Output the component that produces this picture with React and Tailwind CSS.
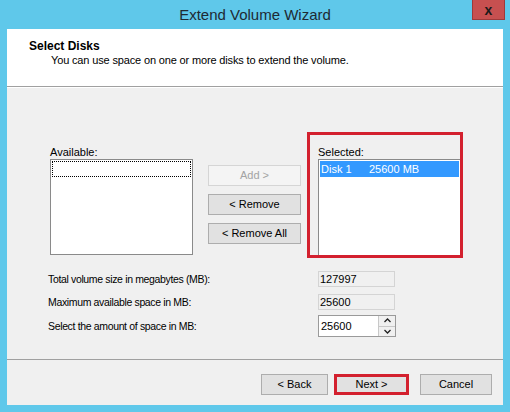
import React from 'react';

const font = "font-['Liberation_Sans',Arial,sans-serif]";

const Btn = ({ children, disabled, className = '' }) => (
  <button
    disabled={disabled}
    className={`h-[21px] text-[11px] leading-none border ${
      disabled
        ? 'bg-[#f4f4f4] border-[#d5d5d5] text-[#a3a3a3]'
        : 'bg-[#e1e1e1] border-[#adadad] text-black'
    } ${className}`}
  >
    {children}
  </button>
);

const Chevron = ({ up }) => (
  <svg width="7" height="5" viewBox="0 0 7 5">
    <path
      d={up ? 'M0.5 4L3.5 1L6.5 4' : 'M0.5 1L3.5 4L6.5 1'}
      fill="none"
      stroke="#222"
      strokeWidth="1.3"
    />
  </svg>
);

const FieldRow = ({ label, children, className = '' }) => (
  <div className={`flex items-center ${className}`}>
    <div className="w-[270px] text-[10.5px] tracking-[-0.35px] leading-[13px] text-black">{label}</div>
    {children}
  </div>
);

export default function App() {
  return (
    <div className={`w-[510px] h-[412px] bg-[#5fc8ea] flex flex-col pb-[7px] ${font}`}>
      {/* title bar */}
      <div className="relative h-[29px] flex items-center justify-center">
        <span className="text-[15px] text-[#1e2a33] pt-[1px]">Extend Volume Wizard</span>
        <div className="absolute right-[5px] top-0 w-[33px] h-[20px] bg-[#c75050] border border-[#9e3a3a] border-t-0 flex items-center justify-center">
          <span className="text-[14px] font-bold text-[#1a1a1a] leading-none">x</span>
        </div>
      </div>

      {/* client area */}
      <div className="mx-[7px] flex-1 flex flex-col bg-[#f0f0f0]">
        {/* header */}
        <div className="h-[58px] bg-white pl-[22px] pt-[10px] border-b border-[#a0a0a0]">
          <div className="text-[12px] leading-[14px] font-bold text-black">Select Disks</div>
          <div className="text-[11px] tracking-[-0.15px] leading-[13px] text-black pl-[22px] pt-[1px]">
            You can use space on one or more disks to extend the volume.
          </div>
        </div>
        <div className="h-px bg-white" />

        {/* lists */}
        <div className="flex items-start pl-[43px] pt-[44px]">
          <div className="pt-[13px] w-[143px]">
            <div className="text-[11px] leading-[14px] text-black">Available:</div>
            <div className="h-[96px] bg-white border border-[#8a8a8a] p-px">
              <div className="h-[16px] border border-dotted border-black" />
            </div>
          </div>

          <div className="flex flex-col gap-[8px] pt-[33px] ml-[15px]">
            <Btn disabled className="w-[93px]">Add &gt;</Btn>
            <Btn className="w-[93px]">&lt; Remove</Btn>
            <Btn className="w-[93px]">&lt; Remove All</Btn>
          </div>

          <div className="ml-[6px] border-[3px] border-[#d3202e] pl-[8px] pt-[10px]">
            <div className="text-[11px] leading-[14px] text-black">Selected:</div>
            <div className="w-[142px] h-[96px] bg-white border border-[#8a8a8a] border-r-0 border-b-0 p-px">
              <div className="h-[16px] bg-[#3399ff] text-white text-[11px] leading-[16px] flex pl-[1px]">
                <span className="w-[48px]">Disk 1</span>
                <span>25600 MB</span>
              </div>
            </div>
          </div>
        </div>

        {/* size fields */}
        <div className="pl-[41px] pt-[13px] flex flex-col">
          <FieldRow label="Total volume size in megabytes (MB):">
            <div className="w-[77px] h-[16px] bg-[#f0f0f0] border border-[#d4d4d4] text-[11px] leading-[14px] pl-[1px] text-black">
              127997
            </div>
          </FieldRow>
          <FieldRow label="Maximum available space in MB:" className="mt-[7px]">
            <div className="w-[77px] h-[16px] bg-[#f0f0f0] border border-[#d4d4d4] text-[11px] leading-[14px] pl-[1px] text-black">
              25600
            </div>
          </FieldRow>
          <FieldRow label="Select the amount of space in MB:" className="mt-[5px]">
            <div className="w-[78px] h-[22px] bg-white border border-[#9a9a9a] flex">
              <div className="flex-1 text-[11px] leading-[20px] pl-[2px] text-black">25600</div>
              <div className="w-[17px] flex flex-col border-l border-[#c8c8c8]">
                <div className="flex-1 bg-[#f0f0f0] border-b border-[#c8c8c8] flex items-center justify-center">
                  <Chevron up />
                </div>
                <div className="flex-1 bg-[#f0f0f0] flex items-center justify-center">
                  <Chevron />
                </div>
              </div>
            </div>
          </FieldRow>
        </div>

        <div className="flex-1" />

        {/* footer */}
        <div className="border-t border-[#a0a0a0] pt-[14px] pb-[10px] pr-[11px] flex justify-end items-center">
          <Btn className="w-[67px]">&lt; Back</Btn>
          <Btn className="w-[75px] ml-[6px] !border-[3px] !border-[#d3202e]">Next &gt;</Btn>
          <Btn className="w-[72px] ml-[11px]">Cancel</Btn>
        </div>
      </div>
    </div>
  );
}
